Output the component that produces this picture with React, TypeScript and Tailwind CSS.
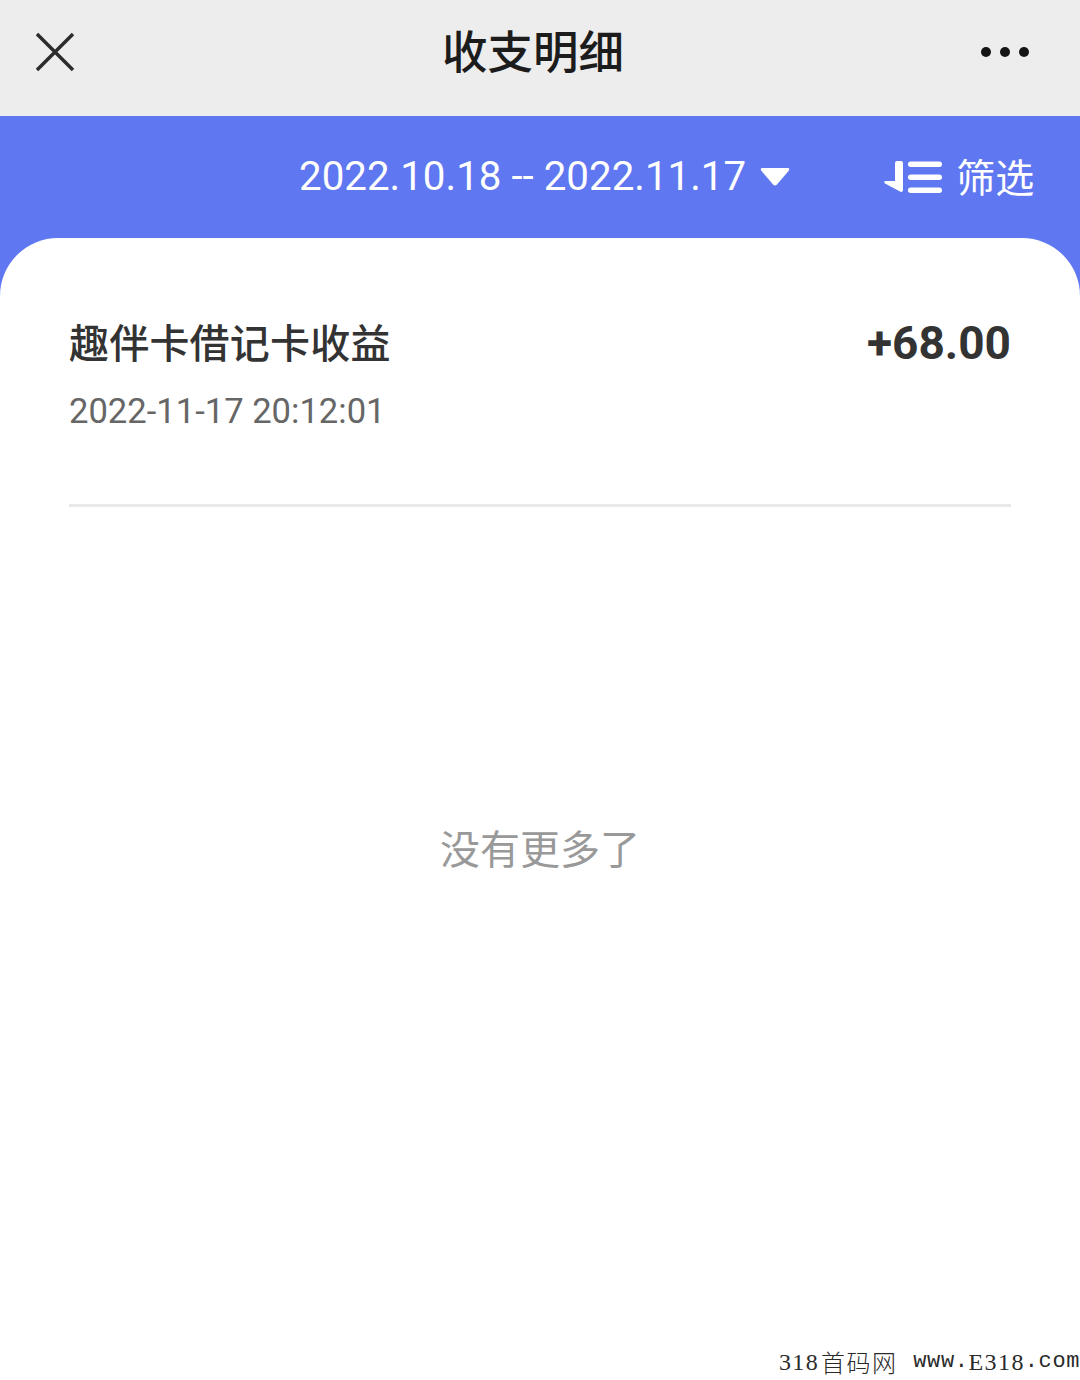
import React from "react";

const cjk = "font-['Roboto','Noto_Sans_CJK_SC',sans-serif]";

function CloseIcon() {
  return (
    <svg width="40" height="40" viewBox="0 0 40 40" className="block">
      <path d="M2 2 L38 38 M38 2 L2 38" stroke="#2b2b2b" strokeWidth="3.4" strokeLinecap="butt" fill="none" />
    </svg>
  );
}

function FilterIcon() {
  return (
    <svg width="58" height="32" viewBox="0 0 58 32" className="block">
      <path d="M13 0 H17 a2 2 0 0 1 2 2 V29 a2 2 0 0 1 -3 1.6 L1 22.5 Q-1 20 2 20 H11 V2 a2 2 0 0 1 2 -2 Z" fill="#fff" />
      <rect x="24" y="0.5" width="34" height="5.5" rx="2.7" fill="#fff" />
      <rect x="24" y="13.5" width="34" height="5.5" rx="2.7" fill="#fff" />
      <rect x="24" y="26.5" width="34" height="5.5" rx="2.7" fill="#fff" />
    </svg>
  );
}

function Caret() {
  return (
    <svg width="30" height="20" viewBox="0 0 30 20" className="block">
      <path d="M2.5 1 H27.5 Q30.5 1 28.5 4 L17 17.5 Q15 19.5 13 17.5 L1.5 4 Q-0.5 1 2.5 1 Z" fill="#fff" />
    </svg>
  );
}

export default function App() {
  return (
    <div className={`relative h-[1380px] w-[1080px] overflow-hidden bg-white ${cjk}`}>
      <header className="flex h-[116px] items-center justify-between bg-[#ededed] pb-[12px] pl-[35px] pr-[51px]">
        <CloseIcon />
        <h1 className="ml-[10px] mt-[4px] text-[45.5px] font-medium leading-none text-[#1c1c1c]">收支明细</h1>
        <div className="flex gap-[9px]">
          <span className="h-[10px] w-[10px] rounded-full bg-[#151515]" />
          <span className="h-[10px] w-[10px] rounded-full bg-[#151515]" />
          <span className="h-[10px] w-[10px] rounded-full bg-[#151515]" />
        </div>
      </header>

      <section className="bg-[#5f77f0]">
        <div className="flex h-[122px] items-start whitespace-nowrap pl-[299px] pt-[36px] text-white">
          <span className="text-[40.3px] leading-[50px]">2022.10.18 -- 2022.11.17</span>
          <span className="ml-[14px] mt-[15px]"><Caret /></span>
          <span className="ml-[94px] mt-[9px]"><FilterIcon /></span>
          <span className="ml-[14px] mt-[2px] text-[39px] leading-[50px]">筛选</span>
        </div>
        <main className="h-[1142px] rounded-t-[58px] bg-white">
          <div className="px-[69px]">
            <div className="flex h-[269px] flex-col border-b-[3px] border-[#e9e9e9] pt-[82px]">
              <div className="flex items-center justify-between">
                <span className="text-[40px] font-medium leading-[50px] tracking-[0.2px] text-[#333333]">趣伴卡借记卡收益</span>
                <span className="mt-[-5px] text-[46px] font-bold leading-[50px] text-[#333333]">+68.00</span>
              </div>
              <span className="mt-[16px] text-[34.6px] leading-[50px] text-[#666666]">2022-11-17 20:12:01</span>
            </div>
          </div>
          <p className="mt-[319px] text-center text-[40px] leading-[50px] text-[#999999]">没有更多了</p>
        </main>
      </section>

      {/* watermark sits over the page corner */}
      <span className="absolute bottom-[3px] right-0 flex items-center whitespace-pre font-['Liberation_Mono',monospace] text-[22px] leading-[30px] tracking-[0.6px] text-[#2a2a2a]">
        <span className="font-['Liberation_Serif',serif] text-[24px] tracking-[1.4px]">318</span>
        <span className="ml-[2px] font-['Noto_Sans_CJK_SC',sans-serif] text-[24px] font-light leading-[30px] tracking-[1.4px]">首码网</span>
        <span className="ml-[16px]">www.</span>
        <span className="font-['Liberation_Serif',serif] text-[24px] tracking-[1.4px]">E318</span>
        <span>.com</span>
      </span>
    </div>
  );
}
